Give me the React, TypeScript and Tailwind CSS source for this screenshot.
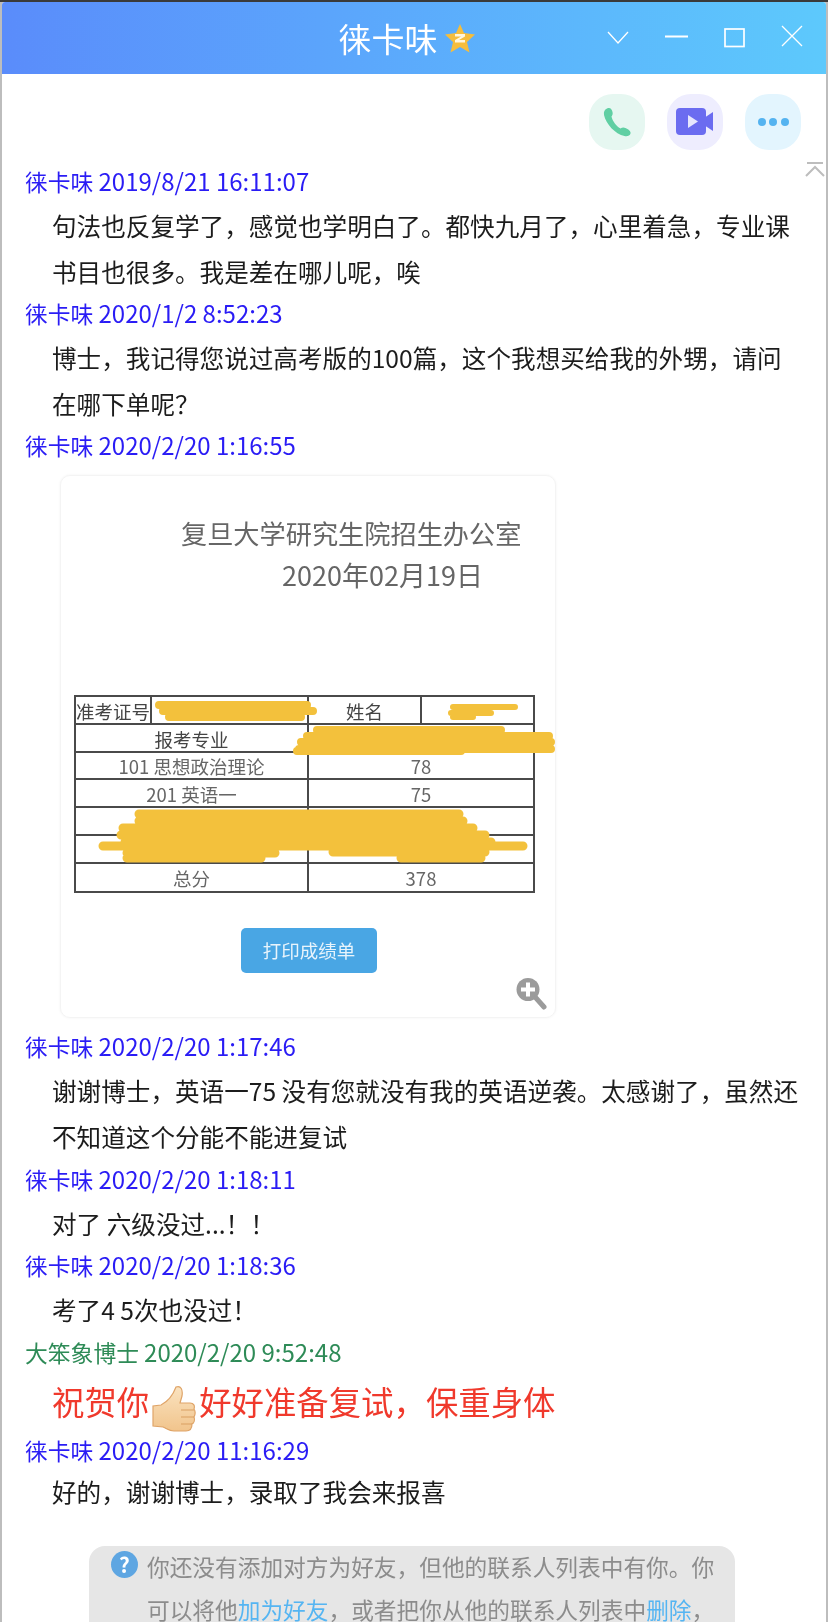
import type { ReactNode } from 'react';

const FONT = 'font-["Noto_Sans_CJK_SC","Liberation_Sans",sans-serif]';

function MsgHead({ name, time, green }: { name: string; time: string; green?: boolean }) {
  return (
    <div className={`pl-[23px] text-[22.800px] leading-[38px] ${green ? 'text-[#2e8b57]' : 'text-[#2a1cf5]'}`}>
      {name} <span className="text-[24px]">{time}</span>
    </div>
  );
}

function MsgBody({ children, tight }: { children: ReactNode; tight?: boolean }) {
  return (
    <div className={`${tight ? '-mt-[1px]' : 'mt-[2px]'} pl-[50px] pr-[20px] text-[24.600px] leading-[45.600px] text-[#1c1c1c]`}>
      {children}
    </div>
  );
}

function Cell({ w, children, bold }: { w: string; children?: ReactNode; bold?: boolean }) {
  return (
    <div className={`${w} flex items-center justify-center border-r-2 border-[#4a4a4a] pt-[2px] last:border-r-0 ${bold ? 'text-[#444]' : 'text-[#666]'}`}>
      {children}
    </div>
  );
}

function ScoreRow({ left, right }: { left?: string; right?: string }) {
  return (
    <div className="flex h-[27.700px] border-b-2 border-[#4a4a4a] last:border-b-0">
      <Cell w="w-[233px]">{left}</Cell>
      <Cell w="flex-1">{right}</Cell>
    </div>
  );
}

function ScoreImage() {
  return (
    <div className="relative ml-[58px] mt-[10px] h-[543px] w-[496px] rounded-[10px] border border-[#f4f4f4] bg-white shadow-[0_0_3px_rgba(0,0,0,0.05)]">
      <div className="pl-[120px] pt-[39px] text-[26.200px] leading-[36px] text-[#666]">复旦大学研究生院招生办公室</div>
      <div className="pl-[221px] pt-[6px] text-[27px] leading-[36px] text-[#666]">2020年02月19日</div>
      <div className="ml-[13px] mt-[102px] w-[461px] border-2 border-[#4a4a4a] text-[18.500px] leading-none">
        <div className="flex h-[27.700px] border-b-2 border-[#4a4a4a]">
          <Cell w="w-[76px]" bold>准考证号</Cell>
          <Cell w="w-[157px]" />
          <Cell w="w-[113px]" bold>姓名</Cell>
          <Cell w="flex-1" />
        </div>
        <div className="flex h-[27.700px] border-b-2 border-[#4a4a4a]">
          <Cell w="w-[233px]" bold>报考专业</Cell>
          <Cell w="flex-1" />
        </div>
        <ScoreRow left="101 思想政治理论" right="78" />
        <ScoreRow left="201 英语一" right="75" />
        <ScoreRow />
        <ScoreRow />
        <ScoreRow left="总分" right="378" />
      </div>
      {/* 成绩单上的涂抹 */}
      <svg className="absolute left-0 top-0" width="495" height="543" viewBox="0 0 495 543" fill="none" stroke="#f3c13c" strokeLinecap="round" strokeWidth="8">
        <path d="M98 229 H246 M102 235 H252 M108 241 H240" />
        <path d="M392 231 H454 M390 237 H430 M392 241 H412" strokeWidth="6" />
        <path d="M256 254 H440 M246 260 H488 M240 266 H490 M238 273 H490 M236 275 H400" />
        <path d="M78 338 H398 M78 345 H402 M62 352 H412 M60 359 H424 M42 370 H462 M64 366 H430 M66 377 H214 M272 376 H424 M66 382 H200 M340 382 H420" strokeWidth="9" />
      </svg>
      <div className="absolute left-[180px] top-[452px] flex h-[45px] w-[136px] items-center justify-center rounded-[5px] bg-[#49a6e4] text-[18.500px] text-[#e8f4fc]">
        打印成绩单
      </div>
      <svg className="absolute left-[454px] top-[500px]" width="32" height="34" viewBox="0 0 32 34">
        <circle cx="13" cy="13.500" r="11.500" fill="#9b9b9b" />
        <path d="M21 22 L29 31" stroke="#9b9b9b" strokeWidth="5" strokeLinecap="round" />
        <path d="M13 6.500 V20.500 M6 13.500 H20" stroke="#fff" strokeWidth="4" />
      </svg>
    </div>
  );
}

function Thumb() {
  return (
    <svg className="mx-[3px] -my-[8px] inline-block align-[-10px]" width="44" height="48" viewBox="0 0 44 48">
      <defs>
        <linearGradient id="skin" x1="0" y1="0" x2="0" y2="1">
          <stop offset="0" stopColor="#fae3c0" />
          <stop offset="1" stopColor="#f1c48c" />
        </linearGradient>
      </defs>
      <path
        d="M24 2 C29 0 31 5 30 11 L28 18 H38 C42 18 43 21 42 24 C44 27 43 30 42 32 C43 35 42 38 40 39 C40 43 38 46 34 46 H22 C17 46 14 43 11 42 L1 41 V21 L9 20 C15 17 21 10 24 2Z"
        fill="url(#skin)"
        stroke="#dfa468"
        strokeWidth="1.200"
      />
      <path d="M29 25 H42 M29 32 H42 M29 39 H40" stroke="#d99f62" strokeWidth="1.200" fill="none" />
    </svg>
  );
}

export default function App() {
  return (
    <div className={`h-[1622px] w-[828px] overflow-hidden border-t-2 border-[#3a3a3a] bg-[#bdbdbd] px-[2px] ${FONT}`}>
      <div className="relative h-full overflow-hidden rounded-t-[3px] bg-white blur-[0.500px]">
        <header className="relative flex h-[72px] items-center justify-center bg-gradient-to-r from-[#5a8cfb] to-[#5dc9fc]">
          <div className="flex items-center gap-[6px] pr-[14px] text-white">
            <span className="text-[33px] leading-none">徕卡味</span>
            <svg width="32" height="32" viewBox="0 0 32 32">
              <path d="M16 2 L20 11 L31 12.500 L23 20 L25.500 30.500 L16 25 L6.500 30.500 L9 20 L1 12.500 L12 11Z" fill="#f5bd3c" />
              <path d="M11 12 H21 V14.500 L15 18 H21 V20.500 H11 V18 L17 14.500 H11Z" fill="#fff6dc" />
            </svg>
          </div>
          <div className="absolute right-[12px] top-0 h-full">
            <svg width="232" height="72" viewBox="0 0 232 72" fill="none" stroke="#fff" strokeWidth="1.700">
              <path d="M26 30 L36 41 L46 30" strokeWidth="1.300" />
              <path d="M83 34.500 H106" strokeWidth="2" />
              <rect x="143" y="27" width="19" height="17.500" />
              <path d="M200 24 L220 44 M220 24 L200 44" strokeWidth="1.300" />
            </svg>
          </div>
        </header>

        <div className="flex h-[88px] justify-end gap-[22px] pr-[25px] pt-[20px]">
          <div className="flex h-[56px] w-[56px] items-center justify-center rounded-[24px] bg-[#e6f7f1]">
            <svg width="32" height="32" viewBox="0 0 32 32">
              <path d="M6 2.500 C9 1 11 3 11.500 6 C12 8 11.500 9 10.500 10.500 C11.500 15 15 20 19.500 22.500 C21 21.500 22.500 21 24.500 22 C27 23 30 25 29.500 27.500 C29 30 26 30.500 23.500 30 C14 28 5 18 3 9 C2.500 6 3.500 3.500 6 2.500Z" fill="#60cfa3" />
            </svg>
          </div>
          <div className="flex h-[56px] w-[56px] items-center justify-center rounded-[24px] bg-[#eeedfe]">
            <svg width="38" height="28" viewBox="0 0 38 28">
              <rect x="0" y="0" width="30" height="27" rx="4" fill="#6b6cf0" />
              <path d="M28 10 L37 4 V23 L28 17Z" fill="#6b6cf0" />
              <path d="M12 7 L22 13.500 L12 20Z" fill="#e6e6fd" />
            </svg>
          </div>
          <div className="flex h-[56px] w-[56px] items-center justify-center gap-[3.500px] rounded-[24px] bg-[#e3f5fe]">
            <span className="h-[8px] w-[8px] rounded-full bg-[#54b3f0]" />
            <span className="h-[8px] w-[8px] rounded-full bg-[#54b3f0]" />
            <span className="h-[8px] w-[8px] rounded-full bg-[#54b3f0]" />
          </div>
        </div>

        <svg className="absolute right-[1px] top-[160px]" width="20" height="16" viewBox="0 0 20 16" fill="none" stroke="#bdbdbd" strokeWidth="2">
          <path d="M2 1 H18 M1 14 L10 5 L19 14" />
        </svg>

        <MsgHead name="徕卡味" time="2019/8/21 16:11:07" />
        <MsgBody>
          句法也反复学了，感觉也学明白了。都快九月了，心里着急，专业课
          <br />
          书目也很多。我是差在哪儿呢，唉
        </MsgBody>
        <MsgHead name="徕卡味" time="2020/1/2 8:52:23" />
        <MsgBody>
          博士，我记得您说过高考版的100篇，这个我想买给我的外甥，请问
          <br />
          在哪下单呢？
        </MsgBody>
        <MsgHead name="徕卡味" time="2020/2/20 1:16:55" />
        <ScoreImage />
        <div className="h-[9px]" />
        <MsgHead name="徕卡味" time="2020/2/20 1:17:46" />
        <MsgBody>
          谢谢博士，英语一75 没有您就没有我的英语逆袭。太感谢了，虽然还
          <br />
          不知道这个分能不能进复试
        </MsgBody>
        <MsgHead name="徕卡味" time="2020/2/20 1:18:11" />
        <MsgBody>对了 六级没过...！！</MsgBody>
        <MsgHead name="徕卡味" time="2020/2/20 1:18:36" />
        <MsgBody>考了4 5次也没过！</MsgBody>
        <MsgHead name="大笨象博士" time="2020/2/20 9:52:48" green />
        <div className="mb-[3px] mt-[2px] pl-[50px] text-[32.400px] leading-[54px] text-[#f0392c]">
          祝贺你
          <Thumb />
          好好准备复试，保重身体
        </div>
        <MsgHead name="徕卡味" time="2020/2/20 11:16:29" />
        <MsgBody tight>好的，谢谢博士，录取了我会来报喜</MsgBody>

        <div className="relative ml-[87px] mt-[32px] w-[646px] rounded-t-[16px] bg-[#e6e6e6] pl-[58px] pr-[10px] text-[22.700px] leading-[42.500px] text-[#8c8c8c]">
          <span className="absolute left-[22px] top-[5px] flex h-[27px] w-[27px] items-center justify-center rounded-full bg-[#5ea6e2] text-[21px] font-bold leading-none text-white">?</span>
          你还没有添加对方为好友，但他的联系人列表中有你。你
          <br />
          可以将他<span className="text-[#55b5f2]">加为好友</span>，或者把你从他的联系人列表中<span className="text-[#55b5f2]">删除</span>，
        </div>
      </div>
    </div>
  );
}
